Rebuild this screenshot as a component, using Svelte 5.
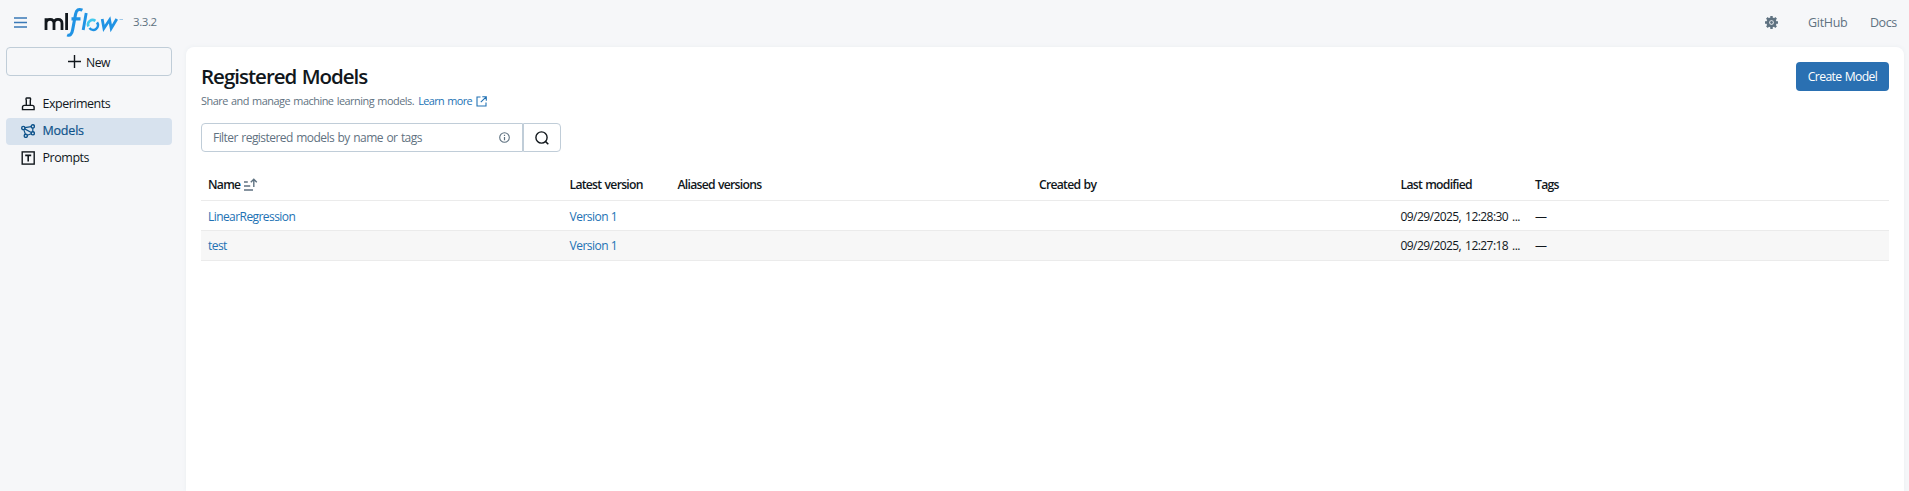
<script>
  const nav = [
    { label: 'Experiments', icon: 'stamp', ls: -0.5 },
    { label: 'Models', icon: 'models', ls: -0.2, active: true },
    { label: 'Prompts', icon: 'text', ls: -0.45 }
  ];
  const rows = [
    { name: 'LinearRegression', version: 'Version 1', modified: '09/29/2025, 12:28:30 ...' },
    { name: 'test', version: 'Version 1', modified: '09/29/2025, 12:27:18 ...' }
  ];
</script>

<div class="app">
  <header>
    <svg class="menu" width="13" height="11" viewBox="0 0 13 11"><path d="M0 1h13M0 5.5h13M0 10h13" stroke="#3a79b7" stroke-width="1.4" /></svg>
    <svg class="logo" width="80" height="32" viewBox="44 6 80 32">
      <g fill="none" stroke="#11171c" stroke-width="2.8">
        <path d="M46 30V18.2M46 23.5Q46 19.4 50 19.4T54 23.5V30M54 23.5Q54 19.4 58 19.4T62 23.5V30" />
        <path d="M66.6 13V30" />
      </g>
      <g fill="none" stroke="#2093e4" stroke-width="2.9">
        <path d="M82.4 10.2Q76.8 7.6 75.6 14L72.7 29.5Q71.5 36.8 67.2 34.8M71.5 18.9H80.5" stroke-width="3.1" />
        <path d="M86.2 13L83.2 30" />
        <path d="M102.2 19L103.9 28.4L109.6 19.8L111.2 28.4L116.8 19" stroke-width="2.8" />
        <path d="M97 22.4A4.6 4.6 0 0 1 89.5 28" stroke-width="2.6" />
      </g>
      <path d="M88.4 26.4A4.6 4.6 0 0 1 95.4 20.9" fill="none" stroke="#43c9ed" stroke-width="2.6" />
      <path d="M119.5 19.5h3.5" stroke="#9fc8e8" />
    </svg>
    <span class="ver">3.3.2</span>
    <svg class="gear" width="13" height="13" viewBox="0 0 14 14"><g fill="none" stroke="#5f7281"><circle cx="7" cy="7" r="4" stroke-width="3" /><path d="M7 0v14M0 7h14M2 2l10 10M12 2L2 12" stroke-width="2.6" stroke-dasharray="2.6 8.9" /><circle cx="7" cy="7" r="1.5" fill="#5f7281" stroke="none" /></g></svg>
    <a class="gh" href="#github">GitHub</a>
    <a class="docs" href="#docs">Docs</a>
  </header>
  <div class="body">
    <aside>
      <button class="new"><svg width="13" height="13" viewBox="0 0 13 13"><path d="M6.5 0v13M0 6.5h13" stroke="#11171c" stroke-width="1.4" /></svg><span>New</span></button>
      <nav>
        {#each nav as item}
          <a href="#nav" class:active={item.active}>
            <svg width="14" height="14" viewBox="0 0 14 14" fill="none" stroke="currentColor" stroke-width="1.4">
              {#if item.icon === 'stamp'}
                <path d="M5.3 8.3V3.5Q4.5 1 5.8 1H8.8Q10.1 1 9.3 3.5V8.3M1.5 12.6V10.3Q1.5 8.4 3.4 8.4H11.2Q13.1 8.4 13.1 10.3V12.6Z" />
              {:else if item.icon === 'models'}
                <circle cx="2.3" cy="4" r="1.6" /><circle cx="11.8" cy="2.4" r="1.6" /><circle cx="11.8" cy="9.3" r="1.6" /><circle cx="4.8" cy="11.8" r="1.6" /><path d="M3.9 3.7L10.2 2.7M11.8 4V7.7M10.2 9.8L6.3 11.2M4.4 10.2L2.8 5.6M3.7 4.9L10.3 8.5" stroke-width="1.2" />
              {:else}
                <rect x="1.2" y=".9" width="12" height="12.2" /><path d="M4.2 4.4H10.2M7.2 4.4V10.4" stroke-width="1.6" />
              {/if}
            </svg>
            <span style="letter-spacing:{item.ls}px">{item.label}</span>
          </a>
        {/each}
      </nav>
    </aside>
    <main>
      <div class="top">
        <div>
          <h1>Registered Models</h1>
          <p><span class="desc">Share and manage machine learning models.</span> <a href="#learn">Learn more<svg width="11" height="11" viewBox="0 0 11 11"><path d="M4.5 1H1V10H10V6.5M6.3.7H10.3V4.7M10.2.8L4.8 6.2" fill="none" stroke="currentColor" stroke-width="1.1" /></svg></a></p>
        </div>
        <button class="create">Create Model</button>
      </div>
      <div class="search">
        <div class="field"><span>Filter registered models by name or tags</span>
          <svg width="11" height="11" viewBox="0 0 11 11"><circle cx="5.5" cy="5.5" r="4.8" fill="none" stroke="#5f7281" stroke-width="1.1" /><path d="M5.5 5v3.2M5.5 2.7v1.3" stroke="#5f7281" stroke-width="1.2" /></svg>
        </div>
        <button aria-label="Search"><svg width="14" height="14" viewBox="0 0 14 14"><circle cx="6.5" cy="6.5" r="5.6" fill="none" stroke="#11171c" stroke-width="1.4" /><path d="M10.4 10.4L13.3 13.3" stroke="#11171c" stroke-width="1.5" /></svg></button>
      </div>
      <div class="table">
        <div class="tr head">
          <span class="name">Name<svg width="14" height="13" viewBox="0 0 14 13"><path d="M0 4h3.8M0 8h6.2M0 12h9M9.8 9V1.4M6.8 4.3L9.8 1.3L12.8 4.3" fill="none" stroke="#5f7281" stroke-width="1.4" /></svg></span>
          <span>Latest version</span><span>Aliased versions</span><span>Created by</span><span>Last modified</span><span>Tags</span>
        </div>
        {#each rows as r}
          <div class="tr"><a href="#model">{r.name}</a><a href="#version">{r.version}</a><span></span><span></span><span class="date">{r.modified}</span><span>—</span></div>
        {/each}
      </div>
    </main>
  </div>
</div>

<style>
  :global(body) { margin: 0; background: #f6f7f9; }
  * { box-sizing: border-box; }
  .app { height: 491px; display: flex; flex-direction: column; overflow: hidden; background: #f6f7f9; color: #11171c; font: 12.2px/20px "Open Sans", sans-serif; }
  a { text-decoration: none; color: #2272b4; }
  button { font: inherit; padding: 0; cursor: pointer; }
  svg { flex: none; }
  header { height: 47px; flex: none; display: flex; align-items: center; padding: 0 12px 3px 14px; }
  .logo { margin-left: 17px; }
  .ver { margin-left: 9px; font-size: 11.5px; color: #5f7281; letter-spacing: -0.4px; }
  .gear { margin-left: auto; }
  .gh, .docs { color: #5f7281; font-size: 12.5px; padding-top: 1px; }
  .gh { margin-left: 30px; width: 62px; letter-spacing: -0.3px; }
  .docs { width: 27px; letter-spacing: -0.45px; }
  .body { flex: 1; display: flex; min-height: 0; }
  aside { width: 186px; flex: none; padding: 0 14px 0 6px; }
  .new { width: 166px; height: 29px; display: flex; align-items: center; justify-content: center; gap: 5px; background: transparent; border: 1px solid #c0cdd8; border-radius: 4px; color: #11171c; letter-spacing: -0.5px; }
  .new span { padding-top: 2px; }
  nav { margin-top: 15px; }
  nav a { height: 27px; display: flex; align-items: center; gap: 7.5px; padding: 0 0 1px 15px; color: #11171c; border-radius: 4px; font-size: 12.5px; }
  nav a.active { background: #d7e2ee; color: #0e538b; -webkit-text-stroke: 0.2px; }
  main { flex: 1; margin-right: 5px; padding: 15px 15px 0; background: #fff; border-radius: 8px 8px 0 0; box-shadow: 0 0 4px #e9edf1; }
  .top { display: flex; justify-content: space-between; height: 61px; }
  h1 { margin: 0; font-size: 20.5px; line-height: 29px; font-weight: 600; letter-spacing: -1px; word-spacing: 1px; }
  p { margin: 0; font-size: 10.9px; color: #5f7281; display: flex; gap: 4px; }
  .desc { letter-spacing: -0.48px; word-spacing: 0.8px; }
  p a { display: flex; align-items: center; gap: 4px; letter-spacing: -0.6px; word-spacing: 0.8px; }
  .create { width: 93px; height: 29px; background: #2a70b2; border: 0; border-radius: 4px; color: #fff; letter-spacing: -0.65px; word-spacing: 0.8px; }
  .search { display: flex; height: 29px; }
  .field { width: 322px; border: 1px solid #c0cdd8; border-radius: 4px 0 0 4px; display: flex; align-items: center; justify-content: space-between; padding: 0 12px 0 11px; color: #5f7281; font-size: 12px; letter-spacing: -0.55px; word-spacing: 0.9px; }
  .search button { width: 38px; background: #fff; border: 1px solid #c0cdd8; border-radius: 0 4px 4px 0; display: grid; place-items: center; }
  .table { margin-top: 18px; }
  .tr { display: grid; grid-template-columns: 361.5px 108px 361.5px 361.5px 134.5px 1fr; height: 30px; padding-top: 2px; align-items: center; border-bottom: 1px solid #ebebeb; font-size: 12px; letter-spacing: -0.5px; }
  .tr > * { padding: 0 7px; white-space: nowrap; }
  .tr:nth-child(3) { background: #f7f7f7; padding-top: 0; }
  .tr > a:first-child { letter-spacing: -0.57px; }
  .tr .date { letter-spacing: -0.56px; word-spacing: 1.4px; }
  .tr.head { height: 31px; padding: 0; font-size: 12.2px; font-weight: 600; letter-spacing: -0.74px; word-spacing: 0.8px; }
  .name { display: flex; align-items: center; gap: 4px; }
  .name svg { margin-top: -2px; }
</style>
